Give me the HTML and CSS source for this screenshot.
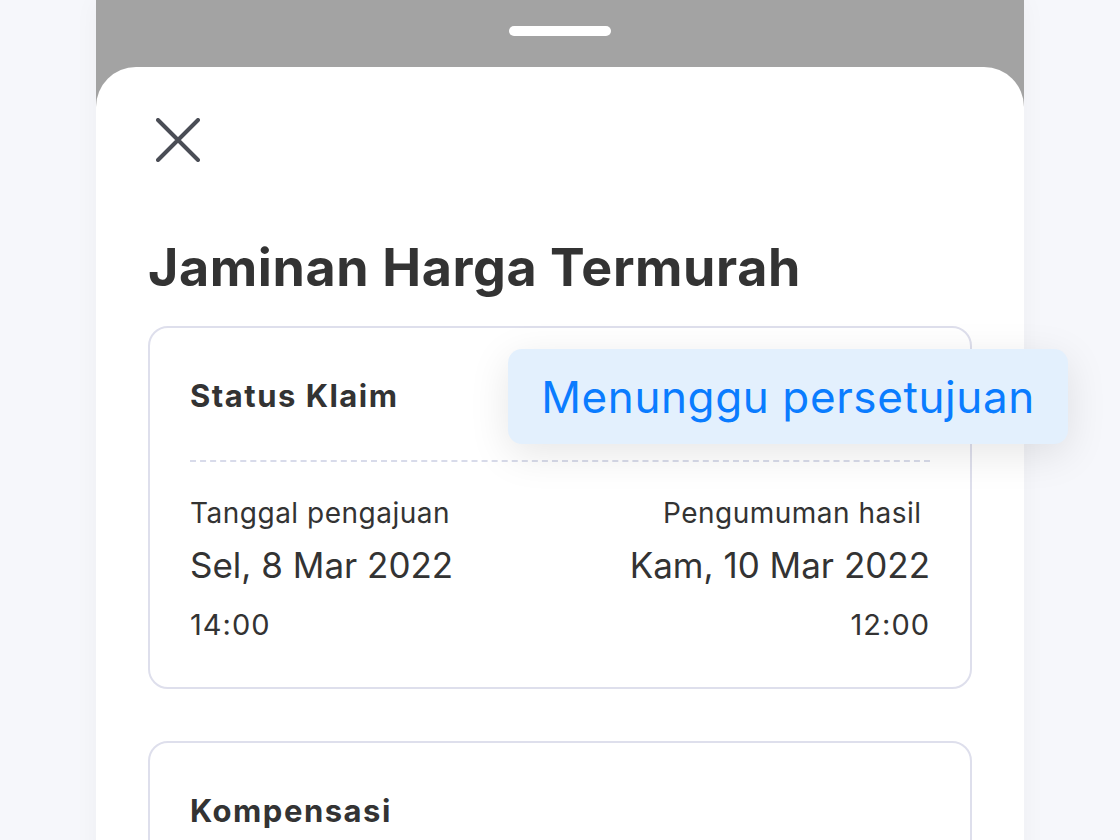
FILE: index.html
```html
<!DOCTYPE html>
<html lang="id">
<head>
<meta charset="UTF-8" />
<title>Jaminan Harga Termurah</title>
<link rel="stylesheet" href="styles.css">
</head>
<body>
<div class="phone">
  <div class="top-bar"><span class="handle"></span></div>

  <div class="sheet">
    <button class="close" aria-label="Tutup">
      <svg width="44" height="44" viewBox="0 0 44 44" fill="none" stroke="#4a4d55" stroke-width="4" stroke-linecap="round">
        <path d="M2 2 L42 42 M42 2 L2 42" />
      </svg>
    </button>

    <h1>Jaminan Harga Termurah</h1>

    <section class="card">
      <div class="card-head">
        <h2>Status Klaim</h2>
      </div>
      <div class="status-badge">Menunggu persetujuan</div>
      <hr class="dashed">
      <div class="dates">
        <div class="date-col">
          <div class="label">Tanggal pengajuan</div>
          <div class="day">Sel, 8 Mar 2022</div>
          <div class="time">14:00</div>
        </div>
        <div class="date-col right">
          <div class="label">Pengumuman hasil&nbsp;</div>
          <div class="day">Kam, 10 Mar 2022</div>
          <div class="time">12:00</div>
        </div>
      </div>
    </section>

    <section class="card compensation">
      <div class="card-head">
        <h2>Kompensasi</h2>
      </div>
    </section>
  </div>
</div>
</body>
</html>
```

FILE: styles.css
```css
* {
  box-sizing: border-box;
}
html, body {
  margin: 0;
  height: 100%;
}
body {
  font-family: Inter, "Noto Sans", sans-serif;
  background: #f6f7fb;
  color: #333;
  overflow: hidden;
}
.phone {
  width: 928px;
  margin: 0 auto;
  background: #a3a3a3;
  min-height: 100%;
  box-shadow: 0 0 24px rgb(0 0 0 / 0.04);
}
.top-bar {
  height: 67px;
  display: flex;
  justify-content: center;
  padding-top: 26px;
}
.handle {
  width: 102px;
  height: 10px;
  border-radius: 5px;
  background: #fff;
}
.sheet {
  background: #fff;
  border-radius: 40px 40px 0 0;
  padding: 51px 52px 0;
  min-height: 780px;
}
.close {
  display: block;
  border: 0;
  background: none;
  padding: 0;
  margin-left: 8px;
  width: 44px;
  height: 44px;
}
h1 {
  margin: 78px 0 0;
  font-size: 52px;
  font-weight: 700;
  line-height: 56px;
  color: #333;
  letter-spacing: 0.6px;
}
.card {
  position: relative;
  border: 2px solid #dedfec;
  border-radius: 20px;
  padding: 0 40px;
  margin-top: 30px;
}
.card + .card {
  margin-top: 52px;
}
.card.compensation {
  min-height: 200px;
}
.card-head {
  padding: 48px 0 0;
}
h2 {
  margin: 0;
  font-size: 31px;
  line-height: 40px;
  font-weight: 700;
  color: #333;
  letter-spacing: 1.5px;
}
.status-badge {
  position: absolute;
  left: 358px;
  top: 21px;
  width: 560px;
  height: 95px;
  display: flex;
  align-items: center;
  justify-content: center;
  background: #e3f0fd;
  border-radius: 14px;
  font-size: 44px;
  letter-spacing: 0.6px;
  color: #0a7cff;
  box-shadow: 0 10px 40px rgb(0 0 0 / 0.1);
}
.dashed {
  border: 0;
  border-top: 2px dashed #d8dbea;
  margin: 44px 0 0;
}
.dates {
  display: flex;
  justify-content: space-between;
  padding: 34px 0 45px;
}
.date-col.right {
  text-align: right;
}
.label {
  font-size: 28px;
  line-height: 34px;
  letter-spacing: 0.5px;
}
.day {
  font-size: 35px;
  line-height: 42px;
  margin-top: 14px;
}
.time {
  font-size: 29px;
  line-height: 34px;
  margin-top: 22px;
  letter-spacing: 1px;
}
```
